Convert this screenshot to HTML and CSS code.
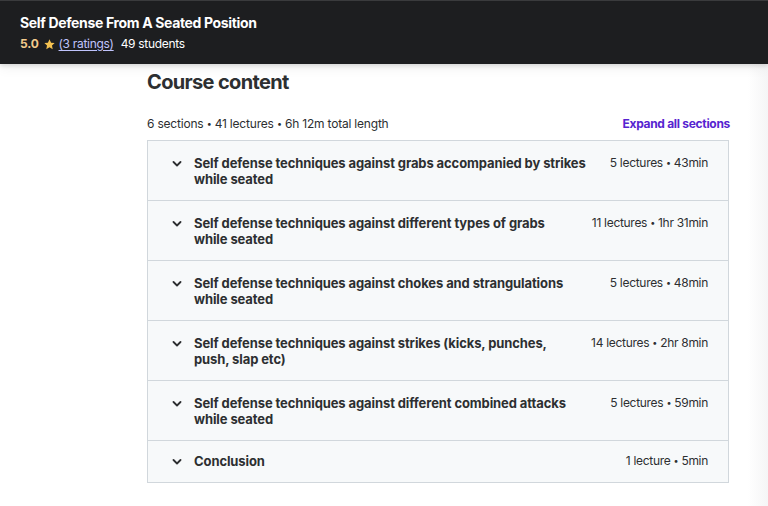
FILE: index.html
```html
<!DOCTYPE html>
<html lang="en">
<head>
<meta charset="utf-8">
<title>Course content</title>
<link rel="stylesheet" href="styles.css">
</head>
<body>
<header class="topbar">
  <div class="course-title">Self Defense From A Seated Position</div>
  <div class="rating-line">
    <span class="score">5.0</span>
    <svg class="star" viewBox="0 0 24 24" width="13" height="13" aria-hidden="true"><path d="M12 2.5l2.9 6.1 6.6.8-4.9 4.6 1.3 6.6L12 17.3l-5.9 3.3 1.3-6.6-4.9-4.6 6.6-.8z" fill="#f4c150"/></svg>
    <a class="ratings" href="#">(3 ratings)</a>
    <span class="students">49 students</span>
  </div>
</header>
<main class="content">
  <h2 class="heading">Course content</h2>
  <div class="summary">
    <span>6 sections <span class="dot">•</span> 41 lectures <span class="dot">•</span> 6h 12m total length</span>
    <a class="expand" href="#">Expand all sections</a>
  </div>
  <div class="sections">
    <div class="section">
      <svg class="chev" viewBox="0 0 10 6" width="10" height="6"><path d="M1.5 1l3.5 3.5 3.5-3.5" fill="none" stroke="#2d2f31" stroke-width="1.8" stroke-linecap="round" stroke-linejoin="round"/></svg>
      <div class="title">Self defense techniques against grabs accompanied by strikes while seated</div>
      <div class="meta">5 lectures <span class="dot">•</span> 43min</div>
    </div>
    <div class="section">
      <svg class="chev" viewBox="0 0 10 6" width="10" height="6"><path d="M1.5 1l3.5 3.5 3.5-3.5" fill="none" stroke="#2d2f31" stroke-width="1.8" stroke-linecap="round" stroke-linejoin="round"/></svg>
      <div class="title">Self defense techniques against different types of grabs while seated</div>
      <div class="meta">11 lectures <span class="dot">•</span> 1hr 31min</div>
    </div>
    <div class="section">
      <svg class="chev" viewBox="0 0 10 6" width="10" height="6"><path d="M1.5 1l3.5 3.5 3.5-3.5" fill="none" stroke="#2d2f31" stroke-width="1.8" stroke-linecap="round" stroke-linejoin="round"/></svg>
      <div class="title">Self defense techniques against chokes and strangulations while seated</div>
      <div class="meta">5 lectures <span class="dot">•</span> 48min</div>
    </div>
    <div class="section">
      <svg class="chev" viewBox="0 0 10 6" width="10" height="6"><path d="M1.5 1l3.5 3.5 3.5-3.5" fill="none" stroke="#2d2f31" stroke-width="1.8" stroke-linecap="round" stroke-linejoin="round"/></svg>
      <div class="title">Self defense techniques against strikes (kicks, punches, push, slap etc)</div>
      <div class="meta">14 lectures <span class="dot">•</span> 2hr 8min</div>
    </div>
    <div class="section">
      <svg class="chev" viewBox="0 0 10 6" width="10" height="6"><path d="M1.5 1l3.5 3.5 3.5-3.5" fill="none" stroke="#2d2f31" stroke-width="1.8" stroke-linecap="round" stroke-linejoin="round"/></svg>
      <div class="title">Self defense techniques against different combined attacks while seated</div>
      <div class="meta">5 lectures <span class="dot">•</span> 59min</div>
    </div>
    <div class="section">
      <svg class="chev" viewBox="0 0 10 6" width="10" height="6"><path d="M1.5 1l3.5 3.5 3.5-3.5" fill="none" stroke="#2d2f31" stroke-width="1.8" stroke-linecap="round" stroke-linejoin="round"/></svg>
      <div class="title">Conclusion</div>
      <div class="meta">1 lecture <span class="dot">•</span> 5min</div>
    </div>
  </div>
</main>
</body>
</html>
```

FILE: styles.css
```css
* { box-sizing: border-box; }
html, body { margin: 0; padding: 0; }
body {
  font-family: Inter, "Noto Sans", sans-serif;
  color: #2d2f31;
  background: linear-gradient(to right, #ffffff 748px, #f5f5f6 768px);
  width: 768px;
  height: 506px;
  overflow: hidden;
}
.topbar {
  height: 64px;
  background: #1d1e20;
  border-top: 1px solid #3a3b3d;
  padding: 13px 20px 0;
  box-shadow: 0 2px 4px rgba(0,0,0,0.12), 0 4px 12px rgba(0,0,0,0.06);
  position: relative;
  z-index: 1;
}
.course-title {
  color: #fff;
  font-weight: 700;
  font-size: 14px;
  line-height: 18px;
  letter-spacing: -0.35px;
}
.rating-line {
  margin-top: 3px;
  display: flex;
  align-items: center;
  font-size: 12px;
  line-height: 18px;
  letter-spacing: -0.2px;
}
.score { color: #f3ca8c; font-weight: 700; }
.star { margin: 0 3px 0 4px; }
.ratings { color: #c0c4fc; text-decoration: underline; text-underline-offset: 2px; margin-right: 7px; letter-spacing: -0.3px; }
.students { color: #fff; letter-spacing: -0.3px; }
.content {
  margin-left: 147px;
  width: 583px;
  padding-top: 6px;
}
.heading {
  margin: 0;
  font-size: 20px;
  line-height: 24px;
  font-weight: 700;
  letter-spacing: -0.65px;
}
.summary {
  margin-top: 22px;
  display: flex;
  justify-content: space-between;
  font-size: 12px;
  line-height: 16px;
  letter-spacing: -0.2px;
}
.dot { font-size: 9px; vertical-align: 1px; }
.expand { color: #5624d0; font-weight: 700; text-decoration: none; letter-spacing: -0.3px; }
.sections {
  margin-top: 8px;
  width: 582px;
  border: 1px solid #d1d7dc;
  background: #f7f9fa;
}
.section {
  display: flex;
  align-items: flex-start;
  padding: 14px 20px 12px 24px;
  border-bottom: 1px solid #d1d7dc;
  min-height: 60px;
}
.section:last-child { border-bottom: none; min-height: 0; padding: 12px 20px 13px 24px; }
.chev { flex: none; margin-top: 6px; margin-right: 12px; }
.title {
  flex: 1;
  font-size: 13px;
  line-height: 16px;
  font-weight: 700;
  letter-spacing: -0.1px;
  padding-right: 18px;
}
.meta {
  flex: none;
  font-size: 12px;
  line-height: 16px;
  letter-spacing: -0.3px;
}
```
